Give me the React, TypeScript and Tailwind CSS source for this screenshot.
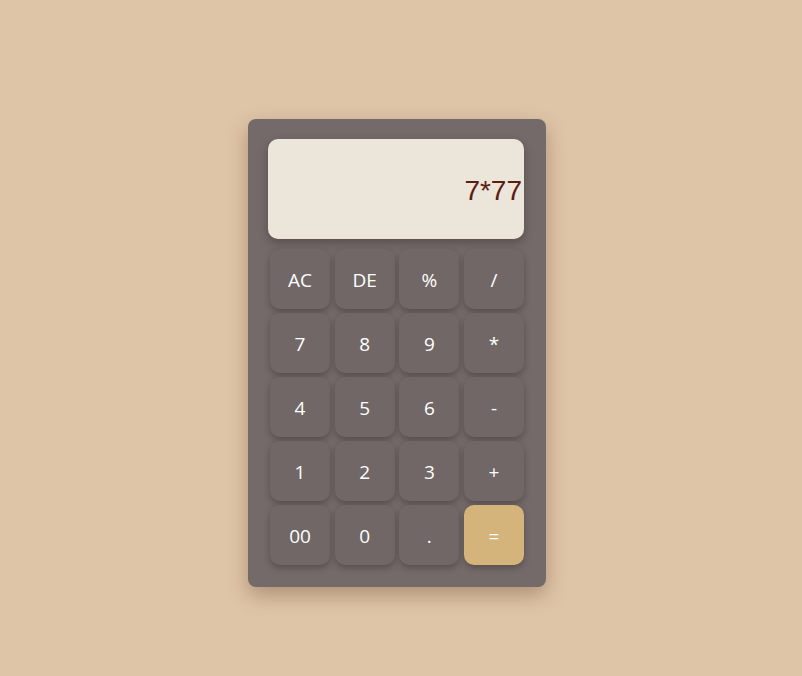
const keys = [
  "AC", "DE", "%", "/",
  "7", "8", "9", "*",
  "4", "5", "6", "-",
  "1", "2", "3", "+",
  "00", "0", ".", "=",
];

export default function App() {
  return (
    <div className="min-h-[676px] w-full bg-[#dfc5a8] flex justify-center pt-[119px] pr-[8px]">
      <div className="w-[298px] h-[468px] bg-[#746a69] rounded-lg pl-5 pr-[22px] pt-5 shadow-[0_8px_20px_rgba(80,50,30,0.35)]">
        <div className="h-[100px] bg-[#ece5d9] rounded-[10px] flex items-center justify-end pr-[2px] pt-[4px] shadow-[0_4px_10px_rgba(40,30,30,0.35)]">
          <span className="text-[#5c1d12] text-[28px] font-['Liberation_Sans',Arial,sans-serif]">
            7*77
          </span>
        </div>
        <div className="mt-[10px] ml-[2px] grid grid-cols-[repeat(4,60px)] gap-x-[4.67px] gap-y-[4.5px]">
          {keys.map((k) => (
            <button
              key={k}
              className={
                "h-[59.5px] pt-[3px] rounded-[10px] text-white text-[19px] font-['Open_Sans','Noto_Sans',sans-serif] shadow-[0_3px_6px_rgba(40,30,30,0.35)] " +
                (k === "=" ? "bg-[#d4b47b]" : "bg-[#716766]")
              }
            >
              {k}
            </button>
          ))}
        </div>
      </div>
    </div>
  );
}
